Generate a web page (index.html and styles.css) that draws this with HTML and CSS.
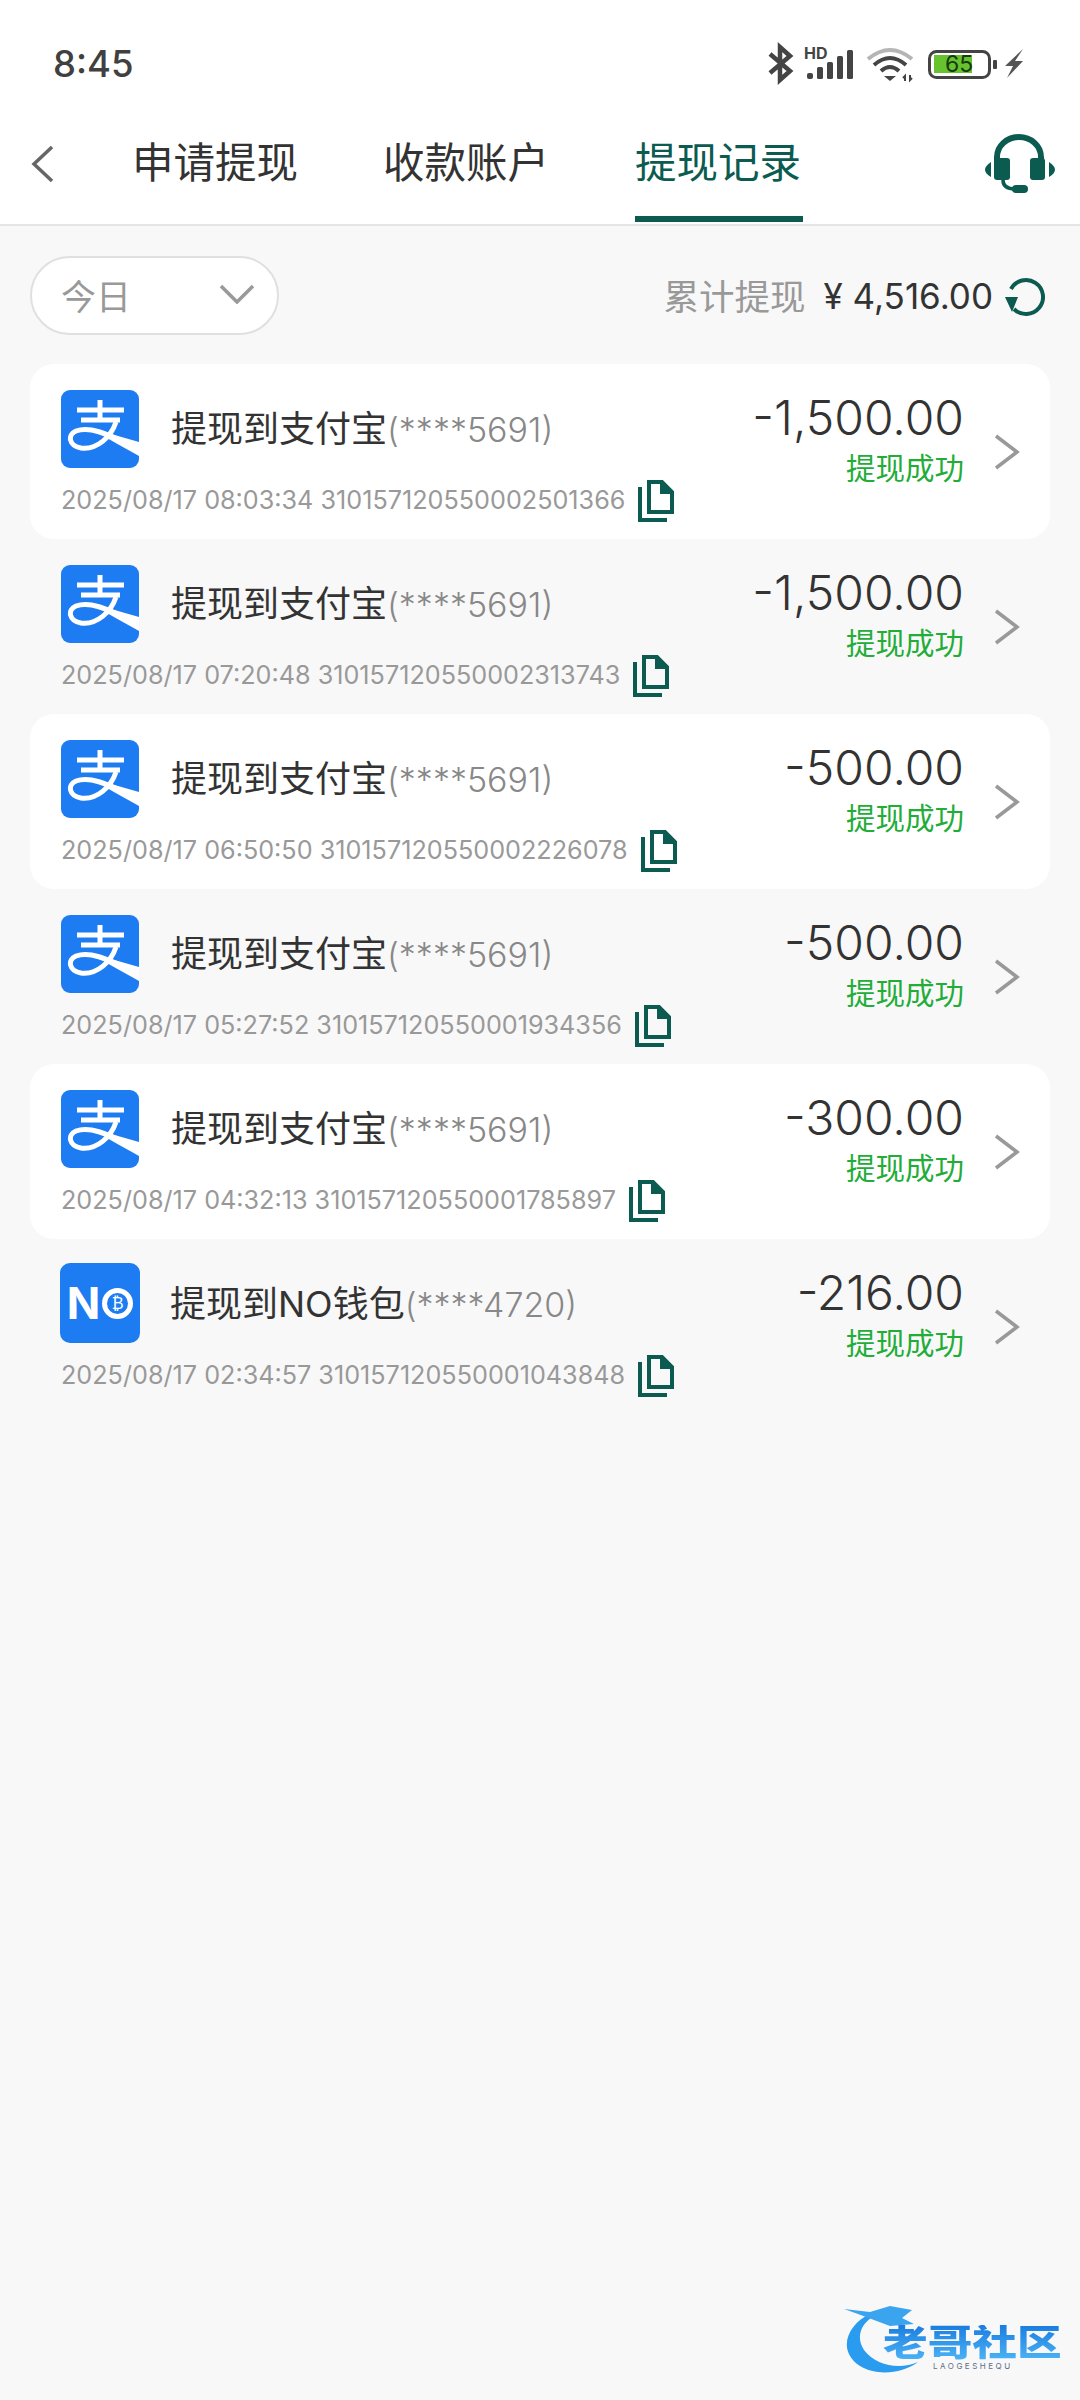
FILE: index.html
```html
<!DOCTYPE html>
<html lang="zh-CN">
<head>
  <meta charset="UTF-8" />
  <meta name="viewport" content="width=device-width, initial-scale=1.0"/>
  <title>提现记录</title>
  <link rel="stylesheet" href="styles.css">
</head>
<body>

  <!-- shared icons -->
  <svg class="sprite">
    <symbol id="alipay" viewBox="0 0 78 78">
      <rect width="78" height="78" rx="9" fill="#1e7cf2"/>
      <path d="M16 20H63M39 10V30M20 30H59" fill="none" stroke="#fff" stroke-width="5"/>
      <path d="M55 32C50 47 36 60 20 58C8 56 6 45 15 41C28 36 42 42 78 59" fill="none" stroke="#fff" stroke-width="5"/>
      <path d="M50 44L78 52V66C68 60 58 55 46 48Z" fill="#fff"/>
    </symbol>
    <symbol id="copy" viewBox="0 0 40 46">
      <path d="M3 10V43H30" fill="none" stroke="#0b5b50" stroke-width="4"/>
      <path d="M12 5H25L35 15V35H12Z" fill="none" stroke="#0b5b50" stroke-width="4"/>
      <path d="M23 3H25L37 15V17H23Z" fill="#0b5b50"/>
    </symbol>
    <symbol id="chevron" viewBox="0 0 26 36">
      <path d="M2 2L23 18L2 34" fill="none" stroke="#999" stroke-width="3.5"/>
    </symbol>
  </svg>

  <div class="status-bar">
    <span class="time">8:45</span>
    <svg class="status-icons" width="280" height="70" viewBox="0 0 280 70">
      <path d="M10 24L30 41L20 50V17L30 26L10 43" fill="none" stroke="#444" stroke-width="4.5"/>
      <text x="44" y="29" class="hd">HD</text>
      <g fill="#444">
        <rect x="47" y="43" width="6" height="6" rx="2"/>
        <rect x="57" y="37" width="6" height="12" rx="1.5"/>
        <rect x="67" y="32" width="6" height="17" rx="1.5"/>
        <rect x="77" y="26" width="6" height="23" rx="1.5"/>
        <rect x="87" y="20" width="6" height="29" rx="1.5"/>
      </g>
      <path d="M108 29Q130 11 152 29" fill="none" stroke="#b5b5b5" stroke-width="4"/>
      <path d="M114 35Q130 21 146 35M121 41Q130 33 139 41" fill="none" stroke="#444" stroke-width="4"/>
      <path d="M124 46H136L130 51Z" fill="#444"/>
      <path d="M145 51V46L143 48M150 45V50L152 48" fill="none" stroke="#444" stroke-width="2"/>
      <rect x="174" y="25" width="38" height="18" fill="#66c32e"/>
      <rect x="169.500" y="21.500" width="60" height="26" rx="7" fill="none" stroke="#444" stroke-width="3"/>
      <text x="199" y="42" class="battery-level">65</text>
      <rect x="233" y="30" width="4" height="9" rx="1" fill="#444"/>
      <path d="M263 19L245 36H253L247 48L263 31H255Z" fill="#555"/>
    </svg>
  </div>

  <div class="top-nav">
    <svg class="back" width="26" height="40" viewBox="0 0 26 40">
      <path d="M22 3L4 20L22 37" fill="none" stroke="#666" stroke-width="3.500"/>
    </svg>
    <a class="tab">申请提现</a>
    <a class="tab">收款账户</a>
    <a class="tab active">提现记录</a>
    <svg class="service" width="90" height="90" viewBox="0 0 90 90">
      <path d="M27 42V37A22 20 0 0 1 71 37V42" fill="none" stroke="#0b5b50" stroke-width="6"/>
      <rect x="24" y="38" width="16" height="22" rx="3" fill="#0b5b50"/>
      <rect x="60" y="38" width="15" height="22" rx="3" fill="#0b5b50"/>
      <path d="M21 42V57Q9 50 21 42ZM79 42V57Q91 50 79 42Z" fill="#0b5b50"/>
      <path d="M33 60Q33 69 45 69" fill="none" stroke="#0b5b50" stroke-width="3.500"/>
      <rect x="42" y="65" width="16" height="8" rx="4" fill="#0b5b50"/>
    </svg>
  </div>

  <div class="content">
    <div class="toolbar">
      <div class="range-select">
        <span>今日</span>
        <svg width="36" height="20" viewBox="0 0 36 20">
          <path d="M2 2L18 18L34 2" fill="none" stroke="#999" stroke-width="3.500"/>
        </svg>
      </div>
      <div class="summary">
        <span class="summary-label">累计提现</span>
        <span class="summary-value">¥ 4,516.00</span>
        <svg width="40" height="40" viewBox="0 0 40 40">
          <path d="M6 13A17 17 0 1 1 9 33" fill="none" stroke="#0b5b50" stroke-width="4"/>
          <path d="M0 21H13L7 36Z" fill="#0b5b50"/>
        </svg>
      </div>
    </div>

    <div class="record odd">
      <div class="record-main">
        <div class="record-title">
          <svg class="channel"><use href="#alipay"/></svg>
          <span>提现到支付宝<em>(****5691)</em></span>
        </div>
        <div class="record-meta">
          <span>2025/08/17 08:03:34 310157120550002501366</span>
          <svg class="copy"><use href="#copy"/></svg>
        </div>
      </div>
      <div class="record-side">
        <div class="amount">-1,500.00</div>
        <div class="state">提现成功</div>
      </div>
      <svg class="chevron"><use href="#chevron"/></svg>
    </div>

    <div class="record">
      <div class="record-main">
        <div class="record-title">
          <svg class="channel"><use href="#alipay"/></svg>
          <span>提现到支付宝<em>(****5691)</em></span>
        </div>
        <div class="record-meta">
          <span>2025/08/17 07:20:48 310157120550002313743</span>
          <svg class="copy"><use href="#copy"/></svg>
        </div>
      </div>
      <div class="record-side">
        <div class="amount">-1,500.00</div>
        <div class="state">提现成功</div>
      </div>
      <svg class="chevron"><use href="#chevron"/></svg>
    </div>

    <div class="record odd">
      <div class="record-main">
        <div class="record-title">
          <svg class="channel"><use href="#alipay"/></svg>
          <span>提现到支付宝<em>(****5691)</em></span>
        </div>
        <div class="record-meta">
          <span>2025/08/17 06:50:50 310157120550002226078</span>
          <svg class="copy"><use href="#copy"/></svg>
        </div>
      </div>
      <div class="record-side">
        <div class="amount">-500.00</div>
        <div class="state">提现成功</div>
      </div>
      <svg class="chevron"><use href="#chevron"/></svg>
    </div>

    <div class="record">
      <div class="record-main">
        <div class="record-title">
          <svg class="channel"><use href="#alipay"/></svg>
          <span>提现到支付宝<em>(****5691)</em></span>
        </div>
        <div class="record-meta">
          <span>2025/08/17 05:27:52 310157120550001934356</span>
          <svg class="copy"><use href="#copy"/></svg>
        </div>
      </div>
      <div class="record-side">
        <div class="amount">-500.00</div>
        <div class="state">提现成功</div>
      </div>
      <svg class="chevron"><use href="#chevron"/></svg>
    </div>

    <div class="record odd">
      <div class="record-main">
        <div class="record-title">
          <svg class="channel"><use href="#alipay"/></svg>
          <span>提现到支付宝<em>(****5691)</em></span>
        </div>
        <div class="record-meta">
          <span>2025/08/17 04:32:13 310157120550001785897</span>
          <svg class="copy"><use href="#copy"/></svg>
        </div>
      </div>
      <div class="record-side">
        <div class="amount">-300.00</div>
        <div class="state">提现成功</div>
      </div>
      <svg class="chevron"><use href="#chevron"/></svg>
    </div>

    <div class="record">
      <div class="record-main">
        <div class="record-title">
          <div class="channel no-wallet">
            <span class="no-letter">N</span>
            <span class="no-coin">₿</span>
          </div>
          <span>提现到NO钱包<em>(****4720)</em></span>
        </div>
        <div class="record-meta">
          <span>2025/08/17 02:34:57 310157120550001043848</span>
          <svg class="copy"><use href="#copy"/></svg>
        </div>
      </div>
      <div class="record-side">
        <div class="amount">-216.00</div>
        <div class="state">提现成功</div>
      </div>
      <svg class="chevron"><use href="#chevron"/></svg>
    </div>
  </div>

  <div class="watermark">
    <svg width="100" height="80" viewBox="0 0 100 80">
      <path d="M30 14C8 24 -4 50 20 66C36 76 62 74 78 62C60 70 36 66 24 50C16 38 20 24 34 16Z" fill="#2a9cf0"/>
      <path d="M4 9L30 12L50 6L72 10L62 18L74 24L50 26L34 20L18 14Z" fill="#3aa4ee"/>
    </svg>
    <div class="watermark-name">老哥社区</div>
    <div class="watermark-sub">LAOGESHEQU</div>
  </div>

</body>
</html>
```

FILE: styles.css
```css
* {
  box-sizing: border-box;
}

body {
  margin: 0;
  width: 1080px;
  height: 2400px;
  position: relative;
  overflow: hidden;
  background-color: #f8f8f8;
  color: #333;
  font-family: Inter, "Noto Sans CJK SC", sans-serif;
}

.sprite {
  display: block;
  width: 0;
  height: 0;
}

.status-bar {
  display: flex;
  justify-content: space-between;
  align-items: flex-start;
  height: 100px;
  padding: 30px 40px 0 53px;
  background-color: #fff;
}

.time {
  font-size: 36.500px;
  line-height: 68px;
  font-weight: 500;
  color: #404040;
}

.hd {
  font-size: 16px;
  font-weight: 700;
  fill: #444;
}

.battery-level {
  font-size: 23px;
  fill: #173a10;
  text-anchor: middle;
}

.top-nav {
  display: flex;
  align-items: stretch;
  position: relative;
  height: 126px;
  padding-left: 132px;
  background-color: #fff;
  border-bottom: 2px solid #e5e5e5;
}

.back {
  position: absolute;
  left: 30px;
  top: 44px;
}

.service {
  position: absolute;
  right: 20px;
  top: 20px;
}

.tab {
  width: 164px;
  margin-right: 87px;
  font-size: 41.500px;
  line-height: 62px;
  padding-top: 32px;
  color: #333;
  white-space: nowrap;
}

.tab.active {
  color: #0b5b50;
  border-bottom: 6px solid #0b5b50;
  height: 122px;
  width: 168px;
  margin-left: 1px;
}

.content {
  padding: 0 30px;
}

.toolbar {
  display: flex;
  justify-content: space-between;
  align-items: center;
  padding-top: 30px;
  margin-bottom: 29px;
}

.range-select {
  display: flex;
  justify-content: space-between;
  align-items: center;
  width: 249px;
  height: 79px;
  padding: 0 22px 3px 29px;
  background-color: #fff;
  border: 2px solid #e0e0e0;
  border-radius: 40px;
  font-size: 35px;
  color: #999;
}

.summary {
  display: flex;
  align-items: center;
  font-size: 35px;
  padding-right: 5px;
}

.summary-label {
  font-size: 35.500px;
  color: #999;
  margin: -3px 18px 0 0;
}

.summary-value {
  margin-right: 12px;
  color: #333;
}

.record {
  display: flex;
  height: 175px;
  padding: 26px 30px 0 31px;
  border-radius: 24px;
}

.record.odd {
  background-color: #fff;
}

.record-main {
  flex: 1;
}

.record-title {
  display: flex;
  align-items: center;
  gap: 32px;
  font-size: 36px;
  line-height: 50px;
}

.record-title em {
  font-style: normal;
  font-size: 34px;
  font-weight: 300;
  color: #888;
}

.channel {
  width: 78px;
  height: 78px;
  flex-shrink: 0;
}

.record-meta {
  display: flex;
  align-items: center;
  gap: 12px;
  margin-top: 9px;
  font-size: 25.200px;
  color: #999;
}

.copy {
  width: 40px;
  height: 46px;
}

.no-wallet {
  display: flex;
  align-items: center;
  justify-content: center;
  gap: 2px;
  width: 80px;
  height: 80px;
  margin: -2px -2px 0 -1px;
  background-color: #1e7cf2;
  border-radius: 10px;
}

.no-letter {
  color: #fff;
  font-size: 44px;
  font-weight: 700;
  line-height: 1;
}

.no-coin {
  width: 31px;
  height: 31px;
  border-radius: 50%;
  border: 5px solid #fff;
  color: #fff;
  font-family: "DejaVu Sans", sans-serif;
  font-size: 16px;
  line-height: 21px;
  text-align: center;
}

.record-side {
  text-align: right;
}

.amount {
  font-size: 48px;
  line-height: 56px;
  font-weight: 300;
  color: #333;
}

.state {
  font-size: 29.500px;
  line-height: 44px;
  color: #22ac38;
}

.chevron {
  width: 26px;
  height: 36px;
  margin: 44px 0 0 30px;
}

/* sits over the page corner */
.watermark {
  position: absolute;
  left: 840px;
  top: 2300px;
  width: 240px;
  height: 80px;
}

.watermark svg {
  position: absolute;
  left: 0;
  top: 0;
}

.watermark-name {
  position: absolute;
  left: 43px;
  top: 25px;
  font-size: 36px;
  line-height: 36px;
  font-weight: 900;
  white-space: nowrap;
  transform: scaleX(1.24);
  transform-origin: left;
  background: linear-gradient(#1a7de0, #4db4f5);
  -webkit-background-clip: text;
  background-clip: text;
  color: transparent;
}

.watermark-sub {
  position: absolute;
  left: 93px;
  top: 61px;
  font-size: 8px;
  line-height: 10px;
  letter-spacing: 2.500px;
  color: #5a6f88;
}
```
